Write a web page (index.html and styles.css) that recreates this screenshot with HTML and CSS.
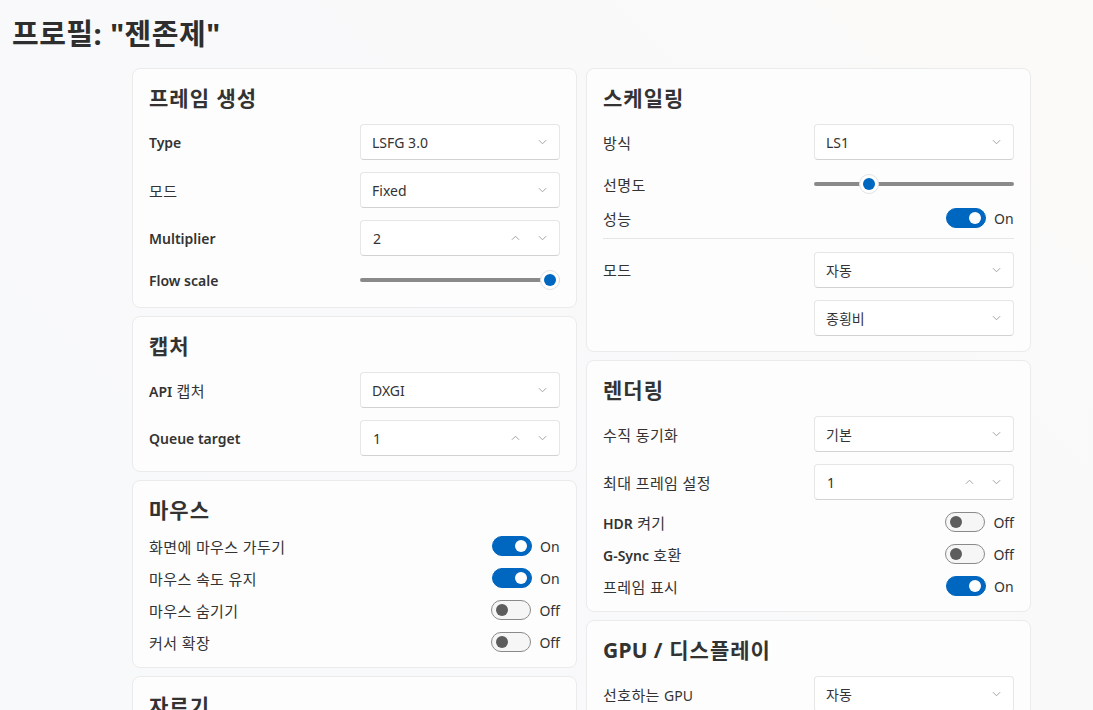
FILE: index.html
```html
<!DOCTYPE html>
<html lang="ko">

<head>
    <meta charset="UTF-8">
    <title>프로필 설정</title>
    <link rel="stylesheet" href="styles.css">
</head>

<body>
    <div class="page">
        <h1 class="title">프로필: "젠존제"</h1>

        <div class="columns">
            <!-- 왼쪽 열 -->
            <div class="column">
                <section class="card">
                    <h2>프레임 생성</h2>
                    <div class="row">
                        <span class="label en">Type</span>
                        <div class="select">LSFG 3.0<svg class="chev" viewBox="0 0 10 6"><path d="M1 1l4 4 4-4"/></svg></div>
                    </div>
                    <div class="row">
                        <span class="label">모드</span>
                        <div class="select">Fixed<svg class="chev" viewBox="0 0 10 6"><path d="M1 1l4 4 4-4"/></svg></div>
                    </div>
                    <div class="row">
                        <span class="label en">Multiplier</span>
                        <div class="select number">2
                            <span class="spin">
                                <svg class="chev" viewBox="0 0 10 6"><path d="M1 5l4-4 4 4"/></svg>
                                <svg class="chev" viewBox="0 0 10 6"><path d="M1 1l4 4 4-4"/></svg>
                            </span>
                        </div>
                    </div>
                    <div class="row">
                        <span class="label en">Flow scale</span>
                        <div class="slider"><span class="thumb" style="--p: 1"></span></div>
                    </div>
                </section>

                <section class="card">
                    <h2>캡처</h2>
                    <div class="row">
                        <span class="label"><b class="en">API</b> 캡처</span>
                        <div class="select">DXGI<svg class="chev" viewBox="0 0 10 6"><path d="M1 1l4 4 4-4"/></svg></div>
                    </div>
                    <div class="row">
                        <span class="label en">Queue target</span>
                        <div class="select number">1
                            <span class="spin">
                                <svg class="chev" viewBox="0 0 10 6"><path d="M1 5l4-4 4 4"/></svg>
                                <svg class="chev" viewBox="0 0 10 6"><path d="M1 1l4 4 4-4"/></svg>
                            </span>
                        </div>
                    </div>
                </section>

                <section class="card">
                    <h2>마우스</h2>
                    <div class="row toggle-row">
                        <span class="label">화면에 마우스 가두기</span>
                        <div class="switch on"><span class="track"></span>On</div>
                    </div>
                    <div class="row toggle-row">
                        <span class="label">마우스 속도 유지</span>
                        <div class="switch on"><span class="track"></span>On</div>
                    </div>
                    <div class="row toggle-row">
                        <span class="label">마우스 숨기기</span>
                        <div class="switch"><span class="track"></span>Off</div>
                    </div>
                    <div class="row toggle-row">
                        <span class="label">커서 확장</span>
                        <div class="switch"><span class="track"></span>Off</div>
                    </div>
                </section>

                <section class="card">
                    <h2>자르기</h2>
                    <div class="row">
                        <span class="label">위쪽</span>
                        <div class="select number">0
                            <span class="spin">
                                <svg class="chev" viewBox="0 0 10 6"><path d="M1 5l4-4 4 4"/></svg>
                                <svg class="chev" viewBox="0 0 10 6"><path d="M1 1l4 4 4-4"/></svg>
                            </span>
                        </div>
                    </div>
                </section>
            </div>

            <!-- 오른쪽 열 -->
            <div class="column">
                <section class="card">
                    <h2>스케일링</h2>
                    <div class="row">
                        <span class="label">방식</span>
                        <div class="select">LS1<svg class="chev" viewBox="0 0 10 6"><path d="M1 1l4 4 4-4"/></svg></div>
                    </div>
                    <div class="row">
                        <span class="label">선명도</span>
                        <div class="slider"><span class="thumb" style="--p: 0.25"></span></div>
                    </div>
                    <div class="row toggle-row">
                        <span class="label">성능</span>
                        <div class="switch on"><span class="track"></span>On</div>
                    </div>
                    <hr class="divider">
                    <div class="row top">
                        <span class="label">모드</span>
                        <div class="stack">
                            <div class="select">자동<svg class="chev" viewBox="0 0 10 6"><path d="M1 1l4 4 4-4"/></svg></div>
                            <div class="select">종횡비<svg class="chev" viewBox="0 0 10 6"><path d="M1 1l4 4 4-4"/></svg></div>
                        </div>
                    </div>
                </section>

                <section class="card">
                    <h2>렌더링</h2>
                    <div class="row">
                        <span class="label">수직 동기화</span>
                        <div class="select">기본<svg class="chev" viewBox="0 0 10 6"><path d="M1 1l4 4 4-4"/></svg></div>
                    </div>
                    <div class="row">
                        <span class="label">최대 프레임 설정</span>
                        <div class="select number">1
                            <span class="spin">
                                <svg class="chev" viewBox="0 0 10 6"><path d="M1 5l4-4 4 4"/></svg>
                                <svg class="chev" viewBox="0 0 10 6"><path d="M1 1l4 4 4-4"/></svg>
                            </span>
                        </div>
                    </div>
                    <div class="row toggle-row">
                        <span class="label"><b class="en">HDR</b> 켜기</span>
                        <div class="switch"><span class="track"></span>Off</div>
                    </div>
                    <div class="row toggle-row">
                        <span class="label"><b class="en">G-Sync</b> 호환</span>
                        <div class="switch"><span class="track"></span>Off</div>
                    </div>
                    <div class="row toggle-row">
                        <span class="label">프레임 표시</span>
                        <div class="switch on"><span class="track"></span>On</div>
                    </div>
                </section>

                <section class="card">
                    <h2><span class="en">GPU /</span> 디스플레이</h2>
                    <div class="row">
                        <span class="label">선호하는 <span class="en-plain">GPU</span></span>
                        <div class="select">자동<svg class="chev" viewBox="0 0 10 6"><path d="M1 1l4 4 4-4"/></svg></div>
                    </div>
                    <div class="row">
                        <span class="label">디스플레이</span>
                        <div class="select">자동<svg class="chev" viewBox="0 0 10 6"><path d="M1 1l4 4 4-4"/></svg></div>
                    </div>
                </section>
            </div>
        </div>
    </div>
</body>

</html>
```

FILE: styles.css
```css
/* 기본 */
html,
body {
    margin: 0;
    padding: 0;
}

body {
    font-family: "Noto Sans", "Noto Sans CJK KR", sans-serif;
    color: #333;
    font-size: 14px;
    background: linear-gradient(225deg, #fbfaf8 0%, #f9f9fa 35%, #f8f9fb 100%);
}

/* 스크롤 영역 */
.page {
    height: 100vh;
    overflow-y: auto;
    scrollbar-width: none;
    padding: 16px 12px 0;
    box-sizing: border-box;
}

.page::-webkit-scrollbar {
    display: none;
}

.title {
    margin: 0 0 16px;
    font-size: 29px;
    line-height: 36px;
    font-weight: 700;
    letter-spacing: 0.5px;
    color: #2e2e2e;
}

/* 두 열 배치 */
.columns {
    display: flex;
    align-items: flex-start;
    gap: 9px;
    margin-left: 120px;
}

.column {
    width: 445px;
    display: flex;
    flex-direction: column;
    gap: 8px;
}

/* 카드 */
.card {
    background-color: #fdfdfd;
    border: 1px solid #ebebeb;
    border-radius: 8px;
    padding: 15px 16px 15px;
    display: flex;
    flex-direction: column;
    gap: 12px;
}

.card h2 {
    margin: 0;
    font-size: 21px;
    line-height: 28px;
    font-weight: 700;
    letter-spacing: 1px;
    color: #333;
}

.card h2 .en {
    letter-spacing: 0.3px;
}

.row {
    display: flex;
    align-items: center;
    justify-content: space-between;
}

.row.top {
    align-items: flex-start;
}

.row.top .label {
    line-height: 36px;
}

.toggle-row {
    height: 20px;
}

/* 한글 라벨은 조금 넓게 */
.label {
    font-size: 15px;
    letter-spacing: 0.4px;
    color: #333;
}

.label.en,
.label .en {
    font-size: 14px;
    font-weight: 600;
    letter-spacing: 0;
}

.label .en-plain {
    font-size: 14px;
    letter-spacing: 0;
}

.stack {
    display: flex;
    flex-direction: column;
    gap: 12px;
}

/* 드롭다운 / 숫자 상자 */
.select {
    width: 200px;
    height: 36px;
    box-sizing: border-box;
    display: flex;
    align-items: center;
    justify-content: space-between;
    padding: 0 12px 0 11px;
    background-color: #fff;
    border: 1px solid #e6e6e6;
    border-bottom-color: #d2d2d2;
    border-radius: 4px;
    font-size: 14px;
    color: #333;
}

.select.number {
    padding-left: 12px;
}

.chev {
    width: 9px;
    height: 6px;
    fill: none;
    stroke: #9a9a9a;
    stroke-width: 1;
}

.spin {
    display: flex;
    align-items: center;
    gap: 18px;
}

/* 슬라이더 */
.slider {
    width: 200px;
    height: 24px;
    position: relative;
    display: flex;
    align-items: center;
}

.slider::before {
    content: "";
    display: block;
    width: 100%;
    height: 4px;
    border-radius: 2px;
    background-color: #8a8a8a;
}

.thumb {
    position: absolute;
    top: 2px;
    left: calc((100% - 20px) * var(--p, 0));
    width: 20px;
    height: 20px;
    box-sizing: border-box;
    border-radius: 50%;
    background-color: #fff;
    border: 1px solid #e2e2e2;
}

.thumb::after {
    content: "";
    position: absolute;
    left: 3px;
    top: 3px;
    width: 12px;
    height: 12px;
    border-radius: 50%;
    background-color: #0067c0;
}

/* 토글 스위치 */
.switch {
    display: flex;
    align-items: center;
    gap: 8px;
    font-size: 14px;
    color: #333;
    min-width: 68px;
}

.track {
    width: 40px;
    height: 20px;
    box-sizing: border-box;
    border-radius: 10px;
    border: 1px solid #8a8a8a;
    background-color: #f6f6f6;
    position: relative;
}

.track::after {
    content: "";
    position: absolute;
    top: 3px;
    left: 4px;
    width: 12px;
    height: 12px;
    border-radius: 50%;
    background-color: #5d5d5d;
}

.switch.on .track {
    background-color: #0067c0;
    border-color: #0067c0;
}

.switch.on .track::after {
    left: 22px;
    background-color: #fff;
}

.divider {
    border: 0;
    border-top: 1px solid #e6e6e6;
    margin: -2px 0 1px;
}
```
